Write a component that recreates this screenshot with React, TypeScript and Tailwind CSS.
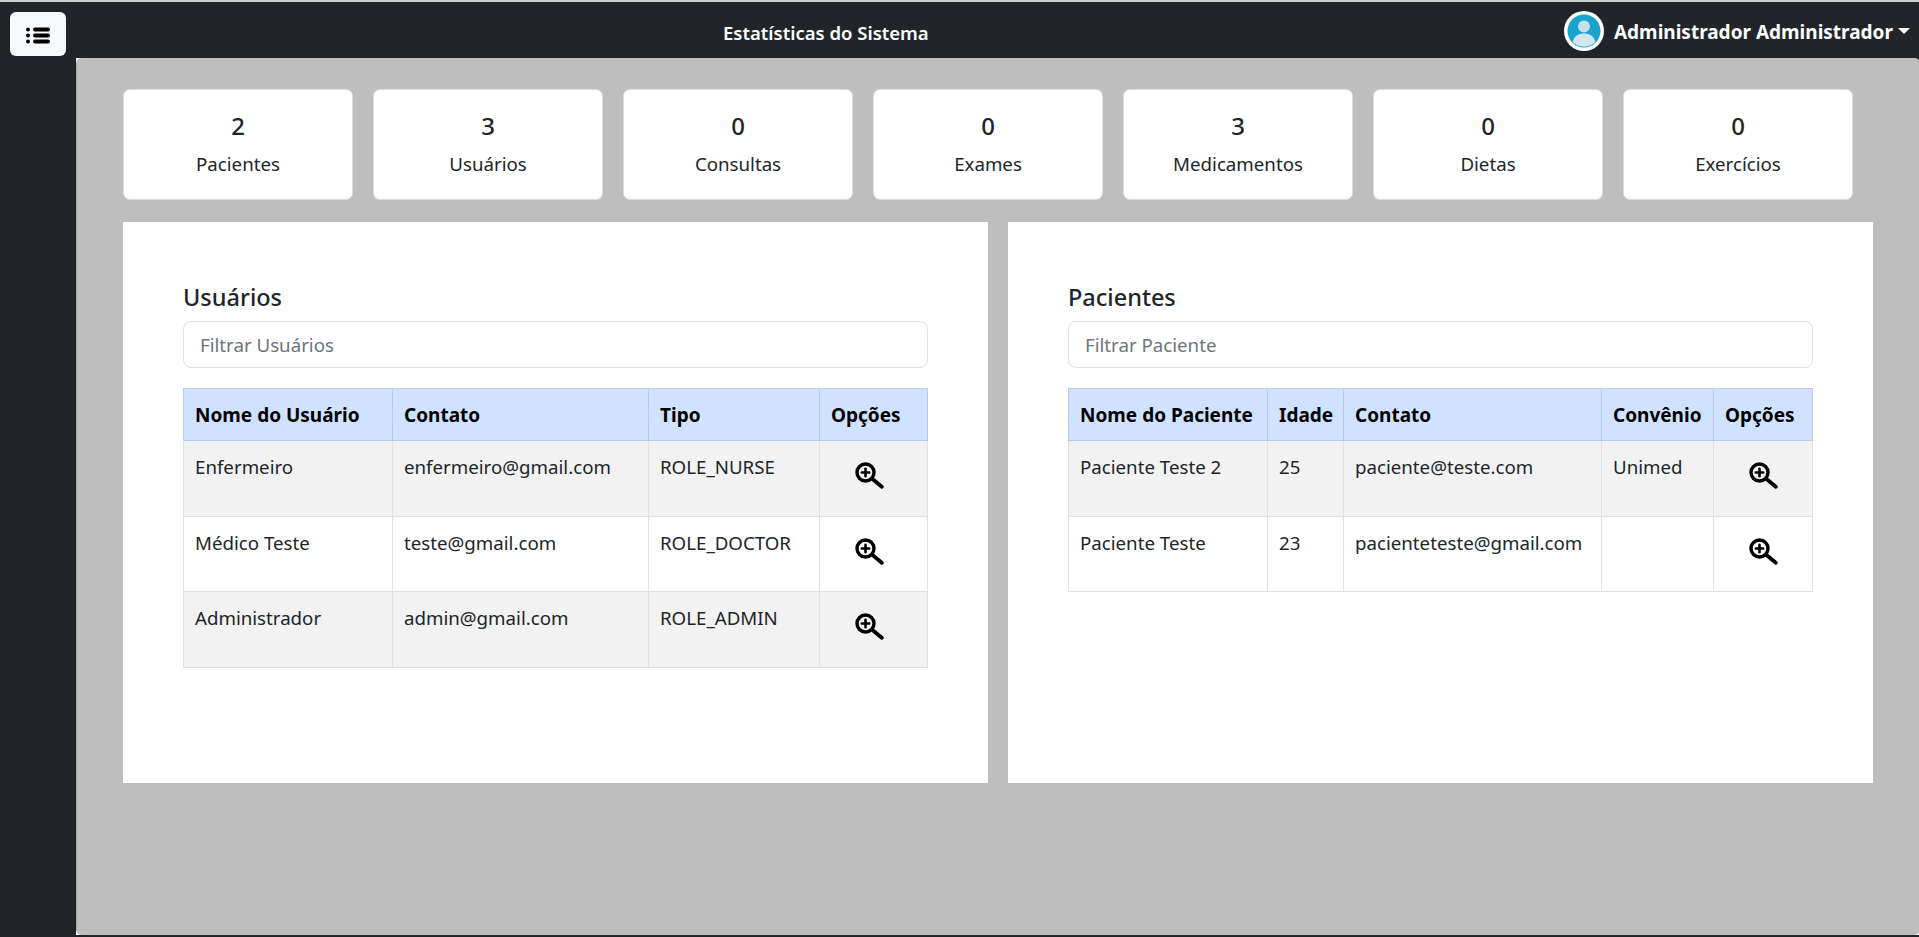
const stats = [
  { value: 2, label: "Pacientes" },
  { value: 3, label: "Usuários" },
  { value: 0, label: "Consultas" },
  { value: 0, label: "Exames" },
  { value: 3, label: "Medicamentos" },
  { value: 0, label: "Dietas" },
  { value: 0, label: "Exercícios" },
];

const users = [
  ["Enfermeiro", "enfermeiro@gmail.com", "ROLE_NURSE"],
  ["Médico Teste", "teste@gmail.com", "ROLE_DOCTOR"],
  ["Administrador", "admin@gmail.com", "ROLE_ADMIN"],
];

const patients = [
  ["Paciente Teste 2", "25", "paciente@teste.com", "Unimed"],
  ["Paciente Teste", "23", "pacienteteste@gmail.com", ""],
];

const th =
  "border border-[#b9cbe6] pl-[11px] pr-[9px] pt-[1px] h-[52px] text-left align-middle font-bold text-[#000] text-[19px] whitespace-nowrap";
const td = "border border-[#dee2e6] pl-[11px] pr-[9px] pt-[12px] align-top text-[#212529] text-[18.7px] whitespace-nowrap";
const input =
  "w-full h-[47px] px-[16px] text-[18.7px] border border-[#dee2e6] rounded-[8px] placeholder:text-[#6c757d] outline-none";

const Avatar = () => (
  <svg viewBox="0 0 40 40" className="w-[40px] h-[40px]">
    <circle cx="20" cy="20" r="20" fill="#fff" />
    <circle cx="20" cy="20" r="16.5" fill="#1ba3cf" />
    <circle cx="20" cy="15.5" r="6" fill="#c9dfea" />
    <path d="M8.5 31c1.500-6 6-8.500 11.500-8.500s10 2.500 11.500 8.500a16.500 16.500 0 0 1-23 0z" fill="#d3e5ef" />
  </svg>
);

const ListIcon = () => (
  <svg viewBox="0 0 24 17" className="w-[24px] h-[17px] mt-[2px]" fill="#000">
    <circle cx="2" cy="2.500" r="2" />
    <circle cx="2" cy="8.500" r="2" />
    <circle cx="2" cy="14.500" r="2" />
    <rect x="7" y="0.500" width="17" height="4" rx="2" />
    <rect x="7" y="6.500" width="17" height="4" rx="2" />
    <rect x="7" y="12.500" width="17" height="4" rx="2" />
  </svg>
);

const ZoomIcon = () => (
  <svg viewBox="0 0 29 27" className="inline-block w-[29px] h-[27px]" fill="none" stroke="#000" strokeLinecap="round">
    <circle cx="10.5" cy="10.5" r="8.500" strokeWidth="3.400" />
    <path d="M10.500 6.800v7.400M6.800 10.500h7.400" strokeWidth="2.600" />
    <path d="M17.500 17l9.300 7.800" strokeWidth="3.800" />
  </svg>
);

const Options = ({ shift }: { shift?: boolean }) => (
  <td className={`border border-[#dee2e6] text-center align-top pt-[21px] ${shift ? "pr-[8px]" : ""}`}>
    <ZoomIcon />
  </td>
);

export default function App() {
  return (
    <div className="h-[937px] flex flex-col bg-[#212529] border-t-2 border-[#cfcfcf] font-['Noto_Sans',sans-serif] overflow-hidden">
      <header className="h-[56px] shrink-0 flex items-center justify-between pl-[10px] pr-[9px] pt-[8px] relative">
        <button className="w-[56px] h-[44px] bg-[#f8f9fa] rounded-[6px] flex items-center justify-center">
          <ListIcon />
        </button>
        <h1 className="absolute left-[723px] text-white font-semibold text-[18.5px] -mt-[3px]">Estatísticas do Sistema</h1>
        <div className="flex items-center gap-[10px] text-white font-bold text-[19px] -mt-[6px]">
          <Avatar />
          <span className="mt-[3px]">Administrador Administrador</span>
          <span className="w-0 h-0 border-x-[6px] border-x-transparent border-t-[6px] border-t-white -ml-[5px]" />
        </div>
      </header>
      <div className="flex-1 flex">
        <aside className="w-[76px] shrink-0" />
        <div className="flex-1 bg-white rounded-tr-[6px] mb-[2px]">
          <main className="h-full bg-[#bebebe] rounded-[6px] border-l border-[#a8a8a8] pl-[46px] pr-[47px] pt-[31px]">
            <div className="flex gap-[20px]">
              {stats.map((s) => (
                <div key={s.label} className="w-[230px] h-[111px] bg-white rounded-[7px] border border-[#dddddd] flex flex-col items-center justify-center text-[#212529]">
                  <div className="text-[24px] leading-[36px] font-medium -mt-[4px]">{s.value}</div>
                  <div className="text-[18.7px] leading-[27px] mt-[6px]">{s.label}</div>
                </div>
              ))}
            </div>
            <div className="flex gap-[20px] mt-[22px]">
              <section className="w-[865px] h-[561px] bg-white pt-[61px] px-[60px]">
                <h2 className="text-[23.5px] font-medium leading-[29px] text-[#212529] mb-[9px]">Usuários</h2>
                <input placeholder="Filtrar Usuários" className={input} />
                <table className="w-[744px] table-fixed border-collapse mt-[20px]">
                  <colgroup>
                    <col className="w-[209px]" />
                    <col className="w-[256px]" />
                    <col className="w-[171px]" />
                    <col className="w-[108px]" />
                  </colgroup>
                  <thead className="bg-[#cfe2ff]">
                    <tr>
                      <th className={th}>Nome do Usuário</th>
                      <th className={th}>Contato</th>
                      <th className={th}>Tipo</th>
                      <th className={th}>Opções</th>
                    </tr>
                  </thead>
                  <tbody>
                    {users.map((u, i) => (
                      <tr key={u[0]} className={`h-[75.500px] ${i % 2 === 0 ? "bg-[#f2f2f2]" : "bg-white"}`}>
                        <td className={td}>{u[0]}</td>
                        <td className={td}>{u[1]}</td>
                        <td className={td}>{u[2]}</td>
                        <Options shift />
                      </tr>
                    ))}
                  </tbody>
                </table>
              </section>
              <section className="w-[865px] h-[561px] bg-white pt-[61px] px-[60px]">
                <h2 className="text-[23.5px] font-medium leading-[29px] text-[#212529] mb-[9px]">Pacientes</h2>
                <input placeholder="Filtrar Paciente" className={input} />
                <table className="w-[744px] table-fixed border-collapse mt-[20px]">
                  <colgroup>
                    <col className="w-[199px]" />
                    <col className="w-[76px]" />
                    <col className="w-[258px]" />
                    <col className="w-[112px]" />
                    <col className="w-[99px]" />
                  </colgroup>
                  <thead className="bg-[#cfe2ff]">
                    <tr>
                      <th className={th}>Nome do Paciente</th>
                      <th className={th}>Idade</th>
                      <th className={th}>Contato</th>
                      <th className={th}>Convênio</th>
                      <th className={th}>Opções</th>
                    </tr>
                  </thead>
                  <tbody>
                    {patients.map((p, i) => (
                      <tr key={p[0]} className={`h-[75.500px] ${i % 2 === 0 ? "bg-[#f2f2f2]" : "bg-white"}`}>
                        <td className={td}>{p[0]}</td>
                        <td className={td}>{p[1]}</td>
                        <td className={td}>{p[2]}</td>
                        <td className={td}>{p[3]}</td>
                        <Options />
                      </tr>
                    ))}
                  </tbody>
                </table>
              </section>
            </div>
          </main>
        </div>
      </div>
    </div>
  );
}
